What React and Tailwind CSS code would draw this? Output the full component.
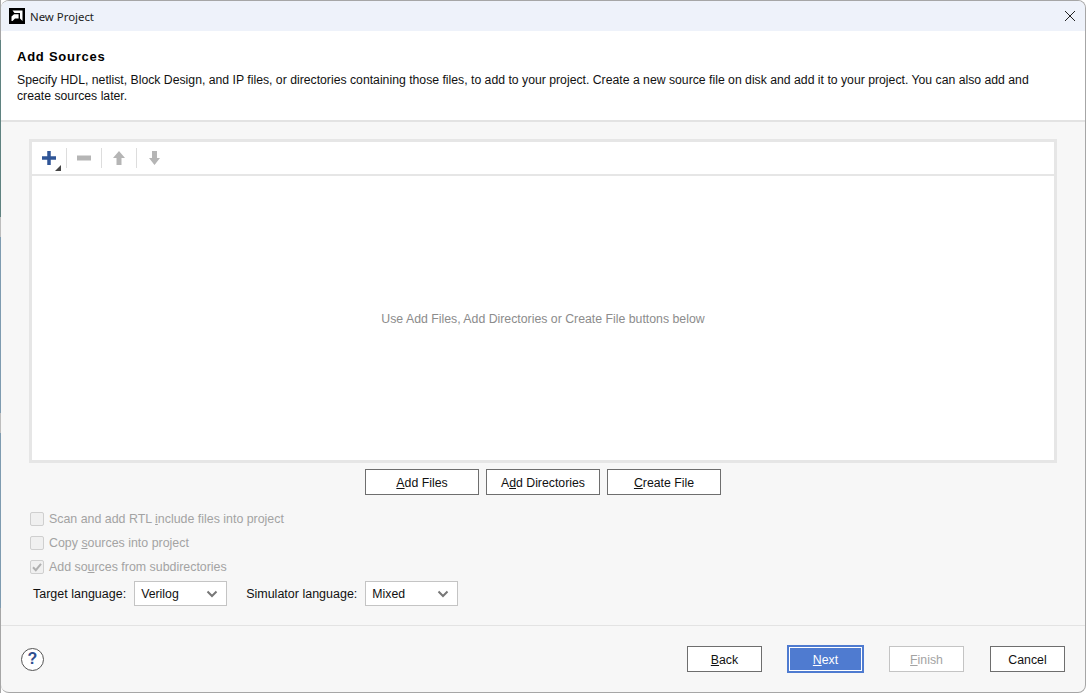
import React from 'react';

function Btn({ children, className = '' }) {
    return (
        <button className={`h-[26px] pt-[2px] border border-[#6e6e6e] bg-white text-[12.3px] text-[#111111] flex items-center justify-center ${className}`}>
            {children}
        </button>
    );
}

function Check({ checked, label }) {
    return (
        <div className="flex items-center h-[24px] pl-[29px] gap-[5px]">
            <span className="w-[14px] h-[14px] rounded-[2px] border border-[#cfcfcf] bg-[#f0f0f0] flex items-center justify-center">
                {checked && (
                    <svg width="12" height="12" viewBox="0 0 12 12" fill="none">
                        <path d="M2 6.2 L4.8 9.2 L10 2.8" stroke="#b0b0b0" strokeWidth="2" />
                    </svg>
                )}
            </span>
            <span className="text-[12.4px] text-[#a3a3a3]">{label}</span>
        </div>
    );
}

function Select({ value, className = '' }) {
    return (
        <div className={`h-[25px] pt-[2px] border border-[#c4c4c4] bg-white flex items-center justify-between pl-[6px] pr-[8px] text-[12.3px] text-[#111111] ${className}`}>
            <span>{value}</span>
            <svg className="-mt-[1px]" width="12" height="8" viewBox="0 0 12 8" fill="none">
                <path d="M1.5 1.5 L6 6 L10.5 1.5" stroke="#777777" strokeWidth="2" />
            </svg>
        </div>
    );
}

export default function App() {
    return (
        <div className="w-[1086px] h-[693px] bg-white overflow-hidden flex font-['Liberation_Sans',Arial,sans-serif]">
            {/* sliver of the windows behind the dialog */}
            <div className="w-px shrink-0 flex flex-col">
                <div className="h-[40px] bg-[#a6a6a6]" />
                <div className="h-[177px] bg-[#5f8280]" />
                <div className="h-[20px] bg-[#bdbdbd]" />
                <div className="h-[176px] bg-[#7e9bb0]" />
                <div className="h-[20px] bg-[#bdbdbd]" />
                <div className="h-[175px] bg-[#7e9bb0]" />
                <div className="flex-1 bg-[#a6a6a6]" />
            </div>
            <div className="flex-1 h-full flex flex-col rounded-[8px] border border-l-0 border-[#a6a6a6] bg-[#f7f7f7] overflow-hidden">

                {/* title bar */}
                <div className="h-[30px] shrink-0 bg-[#eef2fa] flex items-center pl-[8px] pr-[9px]">
                    <svg width="16" height="16" viewBox="0 0 16 16">
                        <rect width="16" height="16" fill="#000000" />
                        <path d="M3.5 2.5 H13.5 V13 L11 10.5 V5 H5.5 Z" fill="#ffffff" />
                        <path d="M2.5 13 V8.5 L5 6.2 H9.6 V10.4 H6 L3.5 13 Z" fill="#ffffff" />
                    </svg>
                    <span className="ml-[5px] pt-[1px] text-[11.4px] text-[#222222] font-['Noto_Sans',sans-serif]">New Project</span>
                    <svg className="ml-auto" width="12" height="12" viewBox="0 0 12 12" fill="none">
                        <path d="M1 1 L11 11 M11 1 L1 11" stroke="#222222" strokeWidth="1" />
                    </svg>
                </div>

                {/* header */}
                <div className="h-[89px] shrink-0 bg-white pl-[16px] pr-[40px] pt-[18px]">
                    <div className="text-[13px] font-bold leading-[16px] tracking-[0.75px] text-black">Add Sources</div>
                    <p className="mt-[7px] text-[12.24px] leading-[16px] text-[#111111]">
                        Specify HDL, netlist, Block Design, and IP files, or directories containing those files, to add to your project. Create a new source file on disk and add it to your project. You can also add and create sources later.
                    </p>
                </div>
                <div className="h-[2px] shrink-0 bg-[#e3e3e3]" />

                {/* sources panel */}
                <div className="mx-[28px] mt-[17px] h-[324px] shrink-0 border-[3px] border-[#e6e6e6] bg-white flex flex-col">
                    <div className="h-[32px] shrink-0 flex items-center pl-[9px] border-b-[2px] border-[#e6e6e6] box-content">
                        <div className="relative w-[16px] h-[16px]">
                            <svg width="16" height="16" viewBox="0 0 16 16">
                                <path d="M8 1 V15 M1 8 H15" stroke="#2f5597" strokeWidth="3.5" />
                            </svg>
                            <span className="absolute left-[14px] top-[15px] w-0 h-0 border-l-[6px] border-l-transparent border-b-[6px] border-b-[#444444]" />
                        </div>
                        <span className="ml-[9px] w-px h-[20px] bg-[#dddddd]" />
                        <svg className="ml-[10px]" width="14" height="14" viewBox="0 0 14 14">
                            <path d="M0 7 H14" stroke="#b5b5b5" strokeWidth="5" />
                        </svg>
                        <span className="ml-[10px] w-px h-[20px] bg-[#dddddd]" />
                        <svg className="ml-[11px]" width="12" height="14" viewBox="0 0 12 14">
                            <path d="M6 0 L12 7 H8.5 V14 H3.5 V7 H0 Z" fill="#b5b5b5" />
                        </svg>
                        <span className="ml-[11px] w-px h-[20px] bg-[#dddddd]" />
                        <svg className="ml-[12px]" width="11" height="14" viewBox="0 0 11 14">
                            <path d="M5.5 14 L11 7 H8 V0 H3 V7 H0 Z" fill="#b5b5b5" />
                        </svg>
                    </div>
                    <div className="flex-1 pt-[2px] flex items-center justify-center text-[12.3px] text-[#8c8c8c]">
                        Use Add Files, Add Directories or Create File buttons below
                    </div>
                </div>

                {/* add buttons */}
                <div className="mt-[6px] flex justify-center gap-[7px]">
                    <Btn className="w-[114px]"><span><u>A</u>dd Files</span></Btn>
                    <Btn className="w-[114px]"><span>A<u>d</u>d Directories</span></Btn>
                    <Btn className="w-[114px]"><span><u>C</u>reate File</span></Btn>
                </div>

                {/* options */}
                <div className="mt-[12px] flex flex-col">
                    <Check label={<span>Scan and add RTL <u>i</u>nclude files into project</span>} />
                    <Check label={<span>Copy <u>s</u>ources into project</span>} />
                    <Check checked label={<span>Add so<u>u</u>rces from subdirectories</span>} />
                </div>
                <div className="mt-[2px] flex items-center pl-[32px] text-[12.5px] text-[#111111]">
                    <span className="pt-[2px]">Target language:</span>
                    <Select value="Verilog" className="ml-[8px] w-[93px]" />
                    <span className="ml-[19px] pt-[2px]">Simulator language:</span>
                    <Select value="Mixed" className="ml-[8px] w-[93px]" />
                </div>

                {/* footer */}
                <div className="mt-[19px] h-px shrink-0 bg-[#e3e3e3]" />
                <div className="flex-1 flex items-center pl-[20px] pr-[20px]">
                    <span className="w-[23px] h-[23px] rounded-full border border-[#555555] bg-white flex items-center justify-center text-[16px] font-bold text-[#2f4f8f]">?</span>
                    <div className="ml-auto flex items-center">
                        <Btn className="w-[75px]"><span><u>B</u>ack</span></Btn>
                        <button className="ml-[25px] w-[77px] h-[28px] pt-[2px] bg-[#4f7bd0] border-[2px] border-[#4f7bd0] outline outline-1 -outline-offset-3 outline-white text-[12.3px] text-white flex items-center justify-center">
                            <span><u>N</u>ext</span>
                        </button>
                        <button className="ml-[25px] w-[75px] h-[26px] pt-[2px] border border-[#c4c4c4] bg-white text-[12.3px] text-[#a3a3a3] flex items-center justify-center">
                            <span><u>F</u>inish</span>
                        </button>
                        <Btn className="ml-[26px] w-[75px]">Cancel</Btn>
                    </div>
                </div>
            </div>
        </div>
    );
}
